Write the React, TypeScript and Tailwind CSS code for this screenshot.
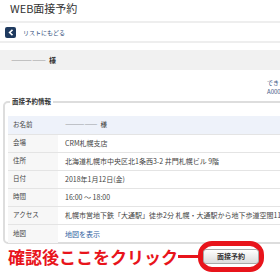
const rows = [
  { label: "会場", value: "CRM札幌支店" },
  { label: "住所", value: "北海道札幌市中央区北1条西3-2 井門札幌ビル 9階" },
  { label: "日付", value: "2018年1月12日(金)" },
  { label: "時間", value: "16:00 ～ 18:00" },
  { label: "アクセス", value: "札幌市営地下鉄「大通駅」徒歩2分 札幌・大通駅から地下歩道空間11番出口直結" },
];

const font = { fontFamily: '"Noto Sans CJK JP", "Noto Sans", sans-serif' };

export default function App() {
  return (
    <div className="w-[280px] h-[280px] overflow-hidden bg-white text-[#444]" style={font}>
      <div className="w-[420px]">
        {/* title */}
        <div className="h-[23px] pl-[10px] pt-[1px] text-[11px] leading-[14px] text-[#333] border-b-2 border-[#eeeeee]">
          WEB面接予約
        </div>

        {/* back */}
        <div className="h-[20px] flex items-center gap-[7px] pl-[5px] border-b-2 border-[#eeeeee]">
          <div className="w-[11px] h-[11px] rounded-[2px] bg-[#1f3a5f] flex items-center justify-center">
            <svg width="6" height="7" viewBox="0 0 6 7">
              <path d="M4.5 0.8 L1.6 3.5 L4.5 6.2" stroke="white" strokeWidth="1.6" fill="none" />
            </svg>
          </div>
          <span className="text-[6px] text-[#2c4a78]">リストにもどる</span>
        </div>

        <div className="h-[7px]" />

        {/* name band */}
        <div className="h-[20px] bg-[#f1f1f1] flex items-center pl-[11px] text-[7px] text-[#333]">
          <span>―――――</span>
          <span className="ml-[3px] font-bold">様</span>
        </div>

        {/* notice */}
        <div className="h-[33px] pl-[267px] pt-[8px] text-[6px] leading-[9px] text-[#3b5583] whitespace-nowrap">
          <div>できます。</div>
          <div>A00000000</div>
        </div>

        {/* fieldset */}
        <fieldset className="ml-[3px] border-2 border-[#dddddd] rounded-[5px] px-[3px] pb-[4px] h-[147px] -mt-[6px]">
          <legend className="px-[2px] ml-[2px] text-[6.5px] font-bold text-[#333]">面接予約情報</legend>
          <div className="mt-[9px] text-[6.5px]">
            <div className="h-[19px] flex items-center bg-[#eef2fa] border-b border-[#e4e4e4]">
              <div className="w-[50px] pl-[5px]">お名前</div>
              <div className="pl-[7px] text-[#333]">
                <span>―――――</span>
                <span className="ml-[3px]">様</span>
              </div>
            </div>
            {rows.map((r) => (
              <div key={r.label} className="h-[18px] flex items-center border-b border-[#e4e4e4] whitespace-nowrap">
                <div className="w-[50px] h-full flex items-center pl-[5px] bg-[#f7f7f7]">{r.label}</div>
                <div className="pl-[7px] text-[7px]">{r.value}</div>
              </div>
            ))}
            <div className="h-[18px] flex items-center">
              <div className="w-[50px] h-full flex items-center pl-[5px] bg-[#f7f7f7]">地図</div>
              <div className="pl-[7px] text-[7px] text-[#2f5fa0]">地図を表示</div>
            </div>
          </div>
        </fieldset>

        {/* call to action */}
        <div className="flex items-center -mt-[3px] h-[31px]">
          <span className="ml-[8px] text-[17px] leading-[20px] font-bold text-[#e8141b] tracking-[0px]">
            確認後ここをクリック
          </span>
          <div className="w-[20px] h-[3px] bg-[#e8141b]" />
          <div className="w-[66px] h-[31px] border-[5px] border-[#e8141b] rounded-[14px] flex items-center justify-center">
            <button className="w-[56px] h-[15px] rounded-[3px] border border-[#a9a9a9] bg-gradient-to-b from-white to-[#dcdcdc] text-[7px] font-bold text-[#333]">
              面接予約
            </button>
          </div>
        </div>
      </div>
    </div>
  );
}
